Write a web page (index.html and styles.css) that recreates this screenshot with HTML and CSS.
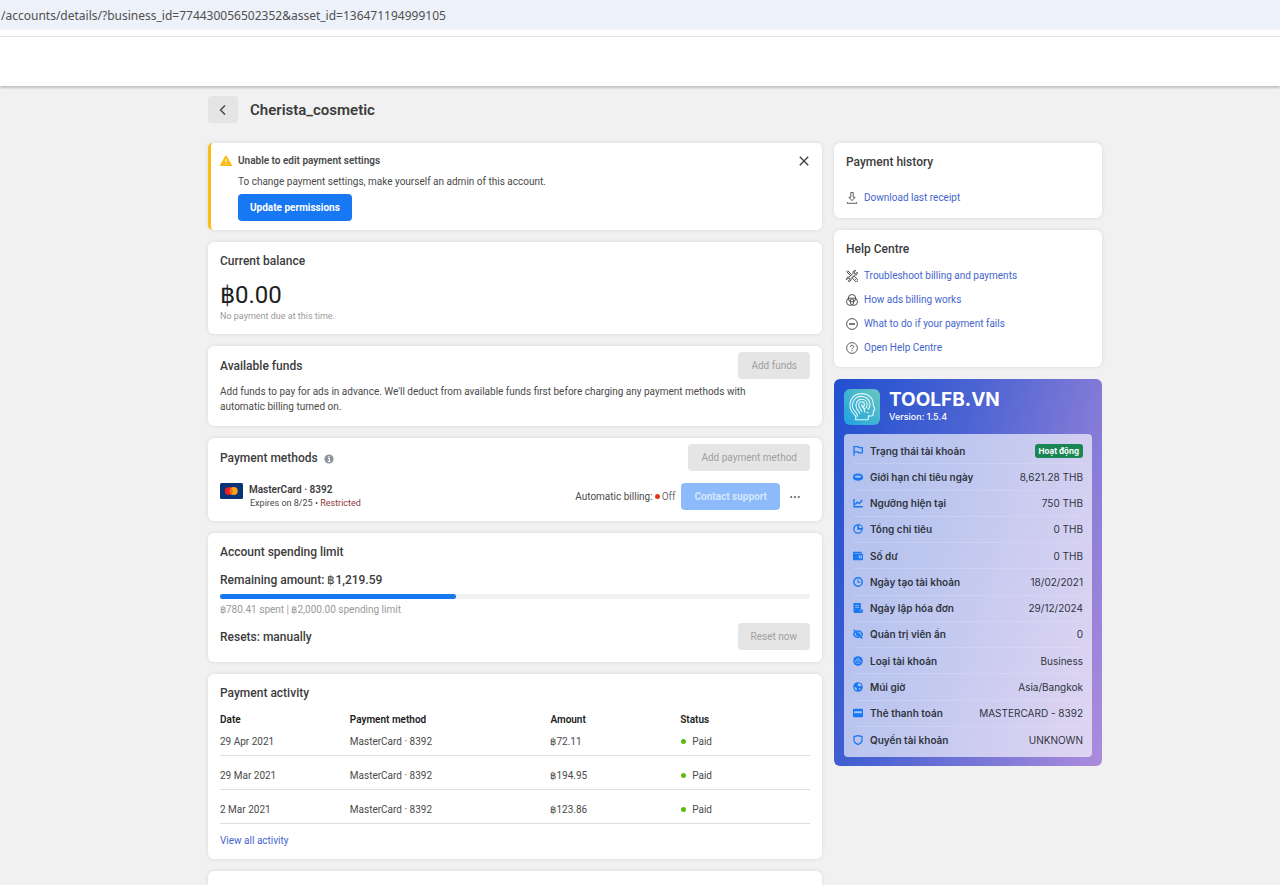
FILE: index.html
```html
<!DOCTYPE html>
<html lang="en">
<head>
<meta charset="utf-8">
<title>Billing - Cherista_cosmetic</title>
<link rel="stylesheet" href="styles.css">
</head>
<body>
<div class="address">/accounts/details/?business_id=774430056502352&amp;asset_id=136471194999105</div>
<header class="topbar"></header>
<main class="page">
  <div class="page-head">
    <button class="back" type="button" aria-label="Back">
      <svg width="10" height="12" viewBox="0 0 10 12" fill="none" stroke="#444" stroke-width="1.4"><path d="M7 1.5 2.5 6 7 10.5"/></svg>
    </button>
    <h1 class="page-title">Cherista_cosmetic</h1>
  </div>

  <div class="columns">
    <div class="column">
      <section class="card alert">
        <svg class="alert-icon" width="12" height="12" viewBox="0 0 12 12"><path d="M5.2.9a.9.9 0 0 1 1.6 0l5 8.9a.9.9 0 0 1-.8 1.3H1a.9.9 0 0 1-.8-1.3z" fill="#fbbc15"/><path d="M6 4v3.2M6 8.500v1.100" stroke="#fff" stroke-width="1.1"/></svg>
        <div class="alert-body">
          <h2 class="alert-title">Unable to edit payment settings</h2>
          <p class="alert-text">To change payment settings, make yourself an admin of this account.</p>
          <button class="btn btn-primary" type="button">Update permissions</button>
        </div>
        <button class="close" type="button" aria-label="Close">
          <svg width="10" height="10" viewBox="0 0 10 10" stroke="#444" stroke-width="1.4"><path d="m.8.8 8.4 8.4M9.2.8.8 9.2"/></svg>
        </button>
      </section>

      <section class="card balance">
        <h2 class="card-title">Current balance</h2>
        <p class="amount">฿0.00</p>
        <p class="note">No payment due at this time.</p>
      </section>

      <section class="card with-action">
        <div class="row">
          <h2 class="card-title">Available funds</h2>
          <button class="btn btn-muted" type="button" disabled>Add funds</button>
        </div>
        <p class="funds-text">Add funds to pay for ads in advance. We'll deduct from available funds first before charging any payment methods with automatic billing turned on.</p>
      </section>

      <section class="card with-action">
        <div class="row">
          <h2 class="card-title">Payment methods
            <svg class="info" width="10" height="10" viewBox="0 0 10 10"><circle cx="5" cy="5" r="4.6" fill="#8d949e"/><path d="M4 4.4h1.400v3M3.800 7.500h2.800M5 2v1.200" stroke="#fff" stroke-width="1.1" fill="none"/></svg>
          </h2>
          <button class="btn btn-muted" type="button" disabled>Add payment method</button>
        </div>
        <div class="row method">
          <div class="method-card">
            <svg width="23" height="16" viewBox="0 0 23 16"><rect width="23" height="16" rx="1.5" fill="#0a3277"/><circle cx="8.8" cy="8" r="4" fill="#eb1c26"/><circle cx="13.7" cy="8" r="4" fill="#f9a51a"/><path d="M11.25 4.85a4 4 0 0 1 0 6.3 4 4 0 0 1 0-6.3z" fill="#f26522"/></svg>
            <div>
              <p class="method-name">MasterCard · 8392</p>
              <p class="method-sub">Expires on 8/25 • <span class="restricted">Restricted</span></p>
            </div>
          </div>
          <div class="method-side">
            <span class="auto">Automatic billing:<i class="dot dot-red"></i><span class="off">Off</span></span>
            <button class="btn btn-support" type="button" disabled>Contact support</button>
            <button class="more" type="button" aria-label="More options">
              <svg width="10" height="4" viewBox="0 0 10 4" fill="#666"><circle cx="1.2" cy="2" r="1.1"/><circle cx="5" cy="2" r="1.1"/><circle cx="8.8" cy="2" r="1.1"/></svg>
            </button>
          </div>
        </div>
      </section>

      <section class="card limit">
        <h2 class="card-title">Account spending limit</h2>
        <p class="remaining">Remaining amount: ฿1,219.59</p>
        <div class="bar"><div class="bar-fill" style="width:40%"></div></div>
        <p class="spent">฿780.41 spent | ฿2,000.00 spending limit</p>
        <div class="row">
          <p class="resets">Resets: manually</p>
          <button class="btn btn-muted" type="button" disabled>Reset now</button>
        </div>
      </section>

      <section class="card activity">
        <h2 class="card-title">Payment activity</h2>
        <table class="table">
          <thead><tr><th class="col-date">Date</th><th class="col-method">Payment method</th><th class="col-amount">Amount</th><th>Status</th></tr></thead>
          <tbody>
            <tr><td>29 Apr 2021</td><td>MasterCard · 8392</td><td>฿72.11</td><td><i class="dot dot-green"></i>Paid</td></tr>
            <tr><td>29 Mar 2021</td><td>MasterCard · 8392</td><td>฿194.95</td><td><i class="dot dot-green"></i>Paid</td></tr>
            <tr><td>2 Mar 2021</td><td>MasterCard · 8392</td><td>฿123.86</td><td><i class="dot dot-green"></i>Paid</td></tr>
          </tbody>
        </table>
        <a class="link view-all" href="#">View all activity</a>
      </section>

      <section class="card next-card"></section>
    </div>

    <aside class="column">
      <section class="card history">
        <h2 class="card-title">Payment history</h2>
        <a class="link icon-link" href="#">
          <svg width="12" height="12" viewBox="0 0 12 12" fill="none" stroke="#606060" stroke-width="1"><path d="M4.800.500h2.400v4.800h1.900L6 8.700 2.900 5.300h1.900zM1.300 10v1.300h9.400V10"/></svg>
          Download last receipt</a>
      </section>

      <section class="card help">
        <h2 class="card-title">Help Centre</h2>
        <ul class="help-list">
          <li><a class="link icon-link" href="#">
            <svg width="12" height="12" viewBox="0 0 12 12" fill="none" stroke="#505050" stroke-width="1"><path d="m.7 1.700 1-1 4 4M.7 1.700l4 4M7.300 7.300l1-1 3 3a1.400 1.400 0 0 1-2 2l-3-3 1-1M8.800 8.800l1 1"/><path d="M11.300 2.200 9.700 3.700 8.300 3.600 8.200 2.200 9.800.6C8.300.2 6.500 1.200 7 3.400L3.400 7C1.200 6.500.2 8.300.6 9.800L2.200 8.200l1.400.1.100 1.400-1.500 1.600C3.700 11.700 5.500 10.800 5 8.600L8.600 5c2.200.5 3.100-1.300 2.700-2.800z"/></svg>
            Troubleshoot billing and payments</a></li>
          <li><a class="link icon-link" href="#">
            <svg width="12" height="12" viewBox="0 0 12 12" fill="none" stroke="#505050" stroke-width="1"><circle cx="6" cy="4.200" r="3.700"/><circle cx="4.200" cy="7.700" r="3.700"/><circle cx="7.800" cy="7.700" r="3.700"/></svg>
            How ads billing works</a></li>
          <li><a class="link icon-link" href="#">
            <svg width="12" height="12" viewBox="0 0 12 12" fill="none" stroke="#505050" stroke-width="1"><circle cx="6" cy="6" r="5.400"/><path d="M3 6h6" stroke-width="1.500"/></svg>
            What to do if your payment fails</a></li>
          <li><a class="link icon-link" href="#">
            <svg width="12" height="12" viewBox="0 0 12 12" fill="none" stroke="#606060" stroke-width="1"><circle cx="6" cy="6" r="5.400"/><path d="M4.300 4.900c0-2.300 3.500-2.100 3.500-.2C7.800 5.900 6 5.900 6 7.300M6 8.200v1.100"/></svg>
            Open Help Centre</a></li>
        </ul>
      </section>

      <section class="tool">
        <div class="tool-head">
          <svg width="36" height="36" viewBox="0 0 36 36" fill="none">
            <defs><linearGradient id="lg" x1="0" y1="1" x2="1" y2="0"><stop offset="0" stop-color="#1fa2e2"/><stop offset="1" stop-color="#67c7bd"/></linearGradient></defs>
            <rect width="36" height="36" rx="6" fill="url(#lg)"/>
            <g stroke="#e4f8fb" stroke-width="1.100" stroke-linecap="round" stroke-linejoin="round">
              <path d="M11.500 30.800c.9-2.300.5-4-1.700-6C2.500 17.500 6 4.600 17.500 4.600c7.500 0 12 5.200 11.700 11.200l1.600 4.300c.3.900-.2 1.300-1.300 1.400l-.3 3.600c-.1 1.500-1 2-2.400 1.900l-2.300-.2-.5 4z"/>
              <path d="M13.500 27.500c.2-2-1.200-3.800-2.700-5.300C5.800 17 9.200 7.400 17.300 7.400c5 0 8.700 3.500 8.700 8.300 0 2-.8 3.500-2.100 4.700"/>
              <path d="M15.800 24.500c-.7-2.200-2.200-3.200-3.200-5.100-2.100-4.300.5-9.200 5-9.200 3.300 0 5.600 2.400 5.600 5.400 0 2-1.100 3.400-2.700 4.200"/>
              <path d="M18 22.500c-.8-2.300-3.300-3.600-3.300-6.400 0-1.900 1.200-3.300 2.900-3.300s2.800 1.200 2.800 2.700-1 2.400-2.300 2.500"/>
              <path d="M17.700 15.500c-.2 2.500 3.700 3.800 2.900 7.500M23 23.500h1"/>
            </g>
          </svg>
          <div>
            <h2 class="tool-name">TOOLFB.VN</h2>
            <p class="tool-version">Version: 1.5.4</p>
          </div>
        </div>
        <ul class="tool-list" lang="vi">
          <li><svg class="ti" viewBox="0 0 10 10"><path d="M1 9.800V.7h4.500l.5 1h3.300v5.200H5.600l-.5-1H1" fill="none" stroke="#1877f2" stroke-width="1.300"/></svg><span class="tl">Trạng thái tài khoản</span><span class="badge">Hoạt động</span></li>
          <li><svg class="ti" viewBox="0 0 10 10"><path d="M0 4.500C0 .6 10 .6 10 4.500v1.300C10 9.700 0 9.700 0 5.800z" fill="#1877f2"/><ellipse cx="5" cy="4.600" rx="3.200" ry="1.200" fill="#a9c4f2"/></svg><span class="tl">Giới hạn chi tiêu ngày</span><span>8,621.28 THB</span></li>
          <li><svg class="ti" viewBox="0 0 10 10"><path d="M1 1v7.800h8.800M2.200 6.500l2-2.300 2 1.300L9.300 2" fill="none" stroke="#1877f2" stroke-width="1.400"/></svg><span class="tl">Ngưỡng hiện tại</span><span>750 THB</span></li>
          <li><svg class="ti" viewBox="0 0 10 10"><path d="M5 .8A4.200 4.200 0 1 0 9.200 5H5z" fill="none" stroke="#1877f2" stroke-width="1.300"/><path d="M5.600.3A4.600 4.600 0 0 1 9.700 4.500H5.600z" fill="none" stroke="#1877f2"/></svg><span class="tl">Tổng chi tiêu</span><span>0 THB</span></li>
          <li><svg class="ti" viewBox="0 0 10 10"><path d="M0 1.500Q0 .8.800.8H8.500V2H1.300v.6H9.300q.7 0 .7.700v5.300q0 .7-.7.700H.8Q0 9.300 0 8.500z" fill="#1877f2"/><path d="M5.800 4.600H9v2.700H5.800z" fill="#b4c6ef"/><circle cx="7.300" cy="6" r=".7" fill="#1877f2"/></svg><span class="tl">Số dư</span><span>0 THB</span></li>
          <li><svg class="ti" viewBox="0 0 10 10"><circle cx="5" cy="5" r="4.200" fill="none" stroke="#1877f2" stroke-width="1.400"/><path d="M5 2.400v2.900h2.400" fill="none" stroke="#1877f2" stroke-width="1.100"/></svg><span class="tl">Ngày tạo tài khoản</span><span>18/02/2021</span></li>
          <li><svg class="ti" viewBox="0 0 10 10"><path d="M.5 0h7.300v6.600H10v1.700Q10 10 8.300 10H2Q.5 10 .5 8.500z" fill="#1877f2"/><path d="M2.200 2.300h3.900M2.200 4.300h3.900M6.500 7.700h2" stroke="#a9c4f2" stroke-width=".8"/></svg><span class="tl">Ngày lập hóa đơn</span><span>29/12/2024</span></li>
          <li><svg class="ti" viewBox="0 0 10 10"><path d="M.4 5.200C2.200.7 7.800.7 9.600 5.200 7.800 9.400 2.200 9.400.4 5.200z" fill="#86aff1" stroke="#1877f2" stroke-width="1.200"/><circle cx="5" cy="5.200" r="1.800" fill="#1877f2"/><path d="m.6.800 8.800 8.700" stroke="#1877f2" stroke-width="1.300"/></svg><span class="tl">Quản trị viên ẩn</span><span>0</span></li>
          <li><svg class="ti" viewBox="0 0 10 10"><circle cx="5" cy="5" r="4.800" fill="#1877f2"/><circle cx="5" cy="3.900" r="1.400" fill="none" stroke="#a9c4f2" stroke-width=".8"/><path d="M2.200 4v3M7.800 4v3M3.400 8c.5-1.600 2.700-1.600 3.200 0" fill="none" stroke="#a9c4f2" stroke-width=".7"/></svg><span class="tl">Loại tài khoản</span><span>Business</span></li>
          <li><svg class="ti" viewBox="0 0 10 10"><circle cx="5" cy="5" r="4.800" fill="#1877f2"/><path d="M5.300 1.200 4.500 3.200l1.400 1L8.600 4C8.300 2.300 7 1.200 5.300 1.200zM1.300 4.700l2.400 1.200.2 2.500C2.400 8 1.200 6.500 1.300 4.700zM6 6l1.800.2-1.400 2z" fill="#b4c6ef"/></svg><span class="tl">Múi giờ</span><span>Asia/Bangkok</span></li>
          <li><svg class="ti" viewBox="0 0 10 10"><path d="M.8.700h8.400q.8 0 .8.800v7q0 .8-.8.800H.8Q0 9.300 0 8.500v-7Q0 .700.800.700z" fill="#1877f2"/><path d="M1.200 3.300h7.600v1.900H1.200z" fill="#b4c6ef"/></svg><span class="tl">Thẻ thanh toán</span><span>MASTERCARD - 8392</span></li>
          <li><svg class="ti" viewBox="0 0 10 10"><path d="M5 .7 9 1.600v3.800C9 7.800 6.500 8.800 5 9.500 3.500 8.800 1 7.800 1 5.400V1.600z" fill="none" stroke="#1877f2" stroke-width="1.200"/></svg><span class="tl">Quyền tài khoản</span><span>UNKNOWN</span></li>
        </ul>
      </section>
    </aside>
  </div>
</main>
</body>
</html>
```
FILE: styles.css
```css
* { box-sizing: border-box; }
body {
  margin: 0;
  min-height: 100vh;
  display: flex;
  flex-direction: column;
  background: #f1f1f1;
  color: #4a4a4a;
  font-family: Roboto, "Noto Sans", "Liberation Sans", sans-serif;
  font-size: 10px;
  line-height: 14px;
}
h1, h2, p, ul { margin: 0; padding: 0; }
ul { list-style: none; }
svg { display: block; flex: none; }
button { font-family: inherit; border: 0; padding: 0; background: none; }

.address {
  height: 30px;
  padding-left: 1px;
  background: #ecf1fa;
  color: #505050;
  font-family: "Noto Sans", sans-serif;
  font-size: 12px;
  line-height: 31px;
}
.topbar {
  height: 56px;
  background: linear-gradient(#e4e6ea, #e4e6ea) 0 6px / 100% 1px no-repeat #fff;
  box-shadow: 0 2px 2px rgba(0, 0, 0, .2);
}
.page {
  flex: 1;
  display: flex;
  flex-direction: column;
  gap: 20px;
  padding: 10px 178px 0 208px;
}
.page-head { display: flex; align-items: center; gap: 12px; }
.back {
  display: flex;
  align-items: center;
  justify-content: center;
  width: 30px;
  height: 27px;
  border-radius: 4px;
  background: #e5e5e5;
}
.page-title { font-size: 15px; line-height: 20px; font-weight: 600; color: #3c3c3c; }

.columns {
  flex: 1;
  display: grid;
  grid-template-columns: minmax(0, 1fr) 268px;
  gap: 12px;
}
.column { display: flex; flex-direction: column; gap: 12px; }
.card {
  padding: 11px 12px;
  border-radius: 6px;
  background: #fff;
  box-shadow: 0 0 4px rgba(0, 0, 0, .1);
}
.card-title { font-size: 12px; line-height: 16px; font-weight: 500; color: #3c3c3c; }
.row { display: flex; align-items: center; justify-content: space-between; }

.btn {
  height: 27px;
  padding: 0 13px;
  border-radius: 4px;
  font-size: 10px;
  line-height: 14px;
}
.btn-primary { padding: 0 12px; background: #1877f2; color: #fff; font-weight: 700; }
.btn-muted { background: #e5e5e5; color: #a0a0a0; }
.btn-support { background: #8cbafa; color: #d5e6fd; font-weight: 700; }

.alert { display: flex; gap: 6px; border-left: 3px solid #fbbc15; padding: 11px 10px 9px 9px; border-radius: 5px; }
.alert-icon { margin-top: 1px; }
.alert-body { flex: 1; }
.alert-title { font-size: 10px; line-height: 14px; font-weight: 600; }
.alert-text { margin: 7px 0 5px; }
.close { align-self: flex-start; padding: 2px 3px; }

.balance { padding-bottom: 12px; }
.amount { margin-top: 12px; font-size: 24px; line-height: 28px; font-weight: 400; color: #1c1e21; }
.note { margin-top: 1px; font-size: 9px; line-height: 12px; color: #999; }

.with-action { padding-top: 6px; padding-bottom: 11px; }
.funds-text { max-width: 560px; margin-top: 5px; line-height: 15px; padding-bottom: 1px; }
.info { display: inline-block; margin-left: 3px; vertical-align: -2px; }

.method { margin-top: 12px; }
.method-card { display: flex; gap: 6px; }
.method-name { font-weight: 600; line-height: 14px; color: #3c3c3c; }
.method-sub { padding-left: 1px; font-size: 9px; line-height: 13px; }
.restricted { color: #8c3a3a; }
.method-side { display: flex; align-items: center; gap: 6px; }
.off { color: #707070; }
.more { padding: 4px 10px 4px 4px; }
.dot { display: inline-block; width: 5px; height: 5px; border-radius: 50%; }
.dot-red { margin: 0 2px; background: #e0351b; vertical-align: 1px; }
.dot-green { margin: 0 6px 0 1px; background: #5dbb10; vertical-align: 1px; }

.limit { padding-bottom: 12px; }
.remaining { margin-top: 12px; font-size: 12px; line-height: 16px; font-weight: 500; color: #3c3c3c; }
.bar { height: 5px; margin-top: 6px; border-radius: 3px; background: #f0f1f2; }
.bar-fill { height: 5px; border-radius: 3px; background: #1877f2; }
.spent { margin: 4px 0 6px; color: #999; }
.resets { font-size: 12px; line-height: 16px; font-weight: 500; color: #3c3c3c; }

.table { width: 100%; margin-top: 12px; border-collapse: collapse; table-layout: fixed; }
.table th { padding: 0; text-align: left; font-weight: 600; color: #222; }
.table td { padding: 13px 0 6px; border-bottom: 1px solid #dadde1; }
.table tbody tr:first-child td { padding-top: 8px; }
.col-date { width: 22%; }
.col-method { width: 34%; }
.col-amount { width: 22%; }
.link { color: #4565cd; text-decoration: none; }
.link:hover { text-decoration: underline; }
.view-all { display: inline-block; margin-top: 10px; }
.next-card { flex: 1; padding: 0; border-radius: 6px 6px 0 0; }

.icon-link { display: flex; align-items: center; gap: 6px; line-height: 24px; }
.history { padding-bottom: 8px; }
.history .icon-link { margin-top: 16px; }
.help { padding-bottom: 7px; }
.help-list { margin-top: 7px; }

.tool {
  padding: 10px 10px 9px;
  border-radius: 6px;
  background: linear-gradient(105deg, #2050d0 0%, #4a63d2 38%, #8e7fd8 80%, #ac8cdc 100%);
  font-family: Inter, sans-serif;
}
.tool-head { display: flex; gap: 9px; color: #fff; }
.tool-name { font-size: 19px; line-height: 21px; font-weight: 700; }
.tool-version { font-size: 9px; line-height: 13px; font-weight: 500; }
.tool-list {
  display: grid;
  grid-auto-rows: 1fr;
  min-height: 323px;
  margin-top: 9px;
  padding: 4px 9px;
  border-radius: 4px;
  background: rgba(255, 255, 255, .64);
  color: #2f3440;
}
.tool-list li { display: flex; align-items: center; gap: 7px; border-bottom: 1px solid rgba(255, 255, 255, .15); }
.tool-list li:last-child { border-bottom: 0; }
.ti { width: 10px; height: 10px; }
.tl { flex: 1; font-weight: 600; }
.badge {
  padding: 0 4px;
  border-radius: 3px;
  background: #198754;
  color: #fff;
  font-size: 8px;
  line-height: 14px;
  font-weight: 700;
}
```
